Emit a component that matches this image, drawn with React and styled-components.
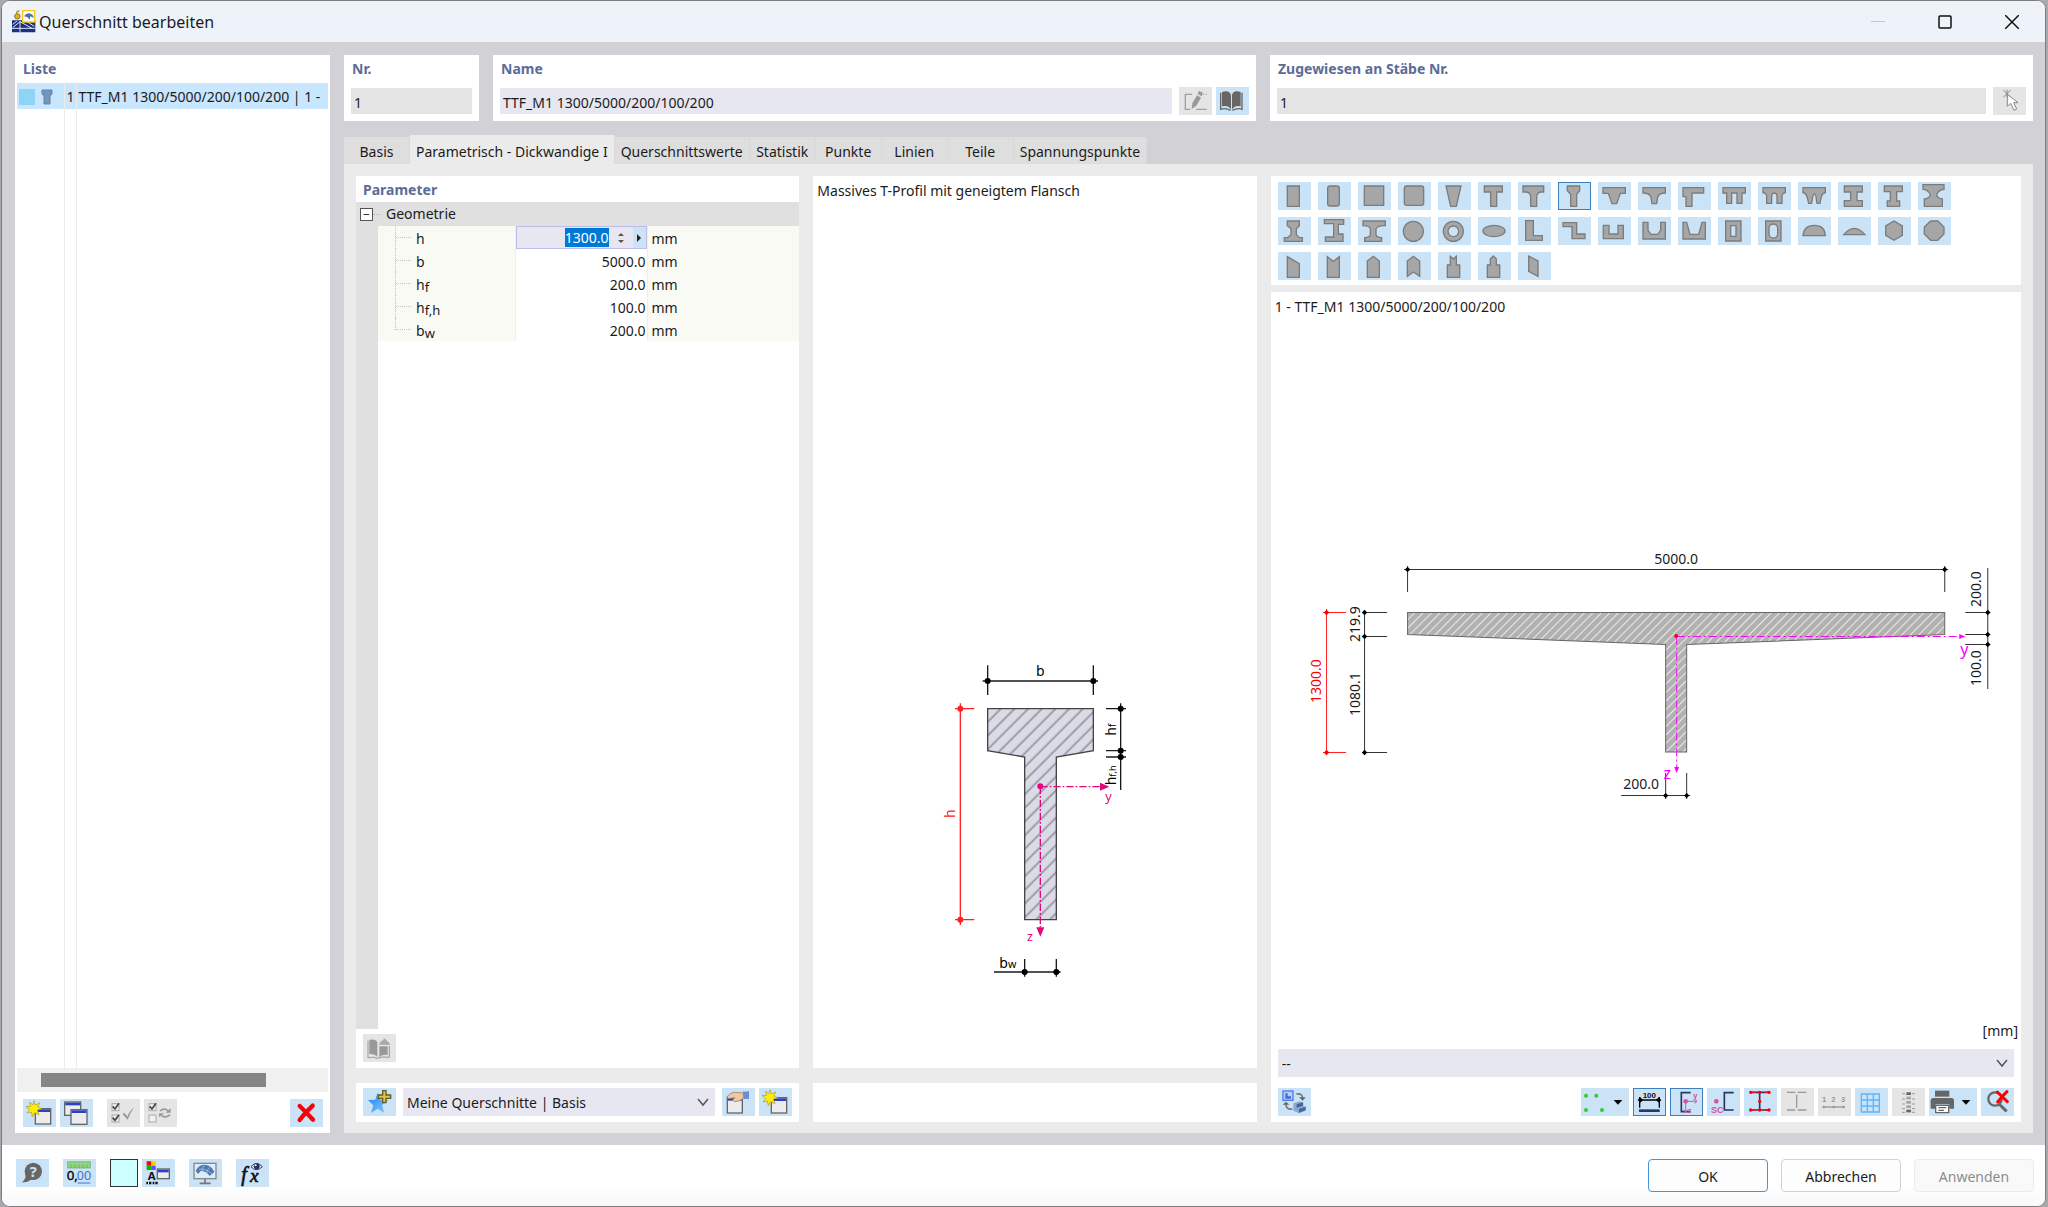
import React, { useState } from 'react';
import styled, { createGlobalStyle, css } from 'styled-components';

const palette = {
  text: '#1b1b1b',
  heading: '#5b6c97',
  frame: '#d1d1d6',
  page: '#ebebeb',
  field: '#e7e7f2',
  readonly: '#e4e4e4',
  button: '#cae3f7',
  buttonOff: '#e5e5e5',
  pressed: '#3f80bc',
  shape: '#a6a6a6',
  shapeLine: '#7c7c7c',
};

const GlobalStyle = createGlobalStyle`
  * {
    box-sizing: border-box;
  }
  body {
    margin: 0;
    background: #a9a9ad;
    color: ${palette.text};
    font-family: 'Noto Sans', 'Open Sans', sans-serif;
    font-size: 14px;
    line-height: 20px;
  }
  button, input, select {
    font: inherit;
    color: inherit;
  }
`;

const Window = styled.div`
  display: flex;
  flex-direction: column;
  min-height: 100vh;
  margin: 0 2px 0 1px;
  border: 1px solid #7d7d7d;
  border-radius: 9px;
  overflow: hidden;
  background: #fff;
`;

const TitleBar = styled.header`
  display: flex;
  align-items: center;
  height: 41px;
  padding-left: 9px;
  background: #eef3fa;
  h1 {
    flex: 1;
    margin: 0 0 0 3px;
    font-size: 16px;
    font-weight: 400;
  }
`;

const CaptionButton = styled.button`
  display: flex;
  align-items: center;
  justify-content: center;
  width: 67px;
  height: 40px;
  padding: 0;
  border: 0;
  background: none;
`;

const Body = styled.main`
  display: grid;
  grid-template-columns: 315px minmax(0, 1fr);
  gap: 14px;
  flex: 1;
  padding: 13px 12px 12px 13px;
  background: ${palette.frame};
`;

const Panel = styled.section`
  display: flex;
  flex-direction: column;
  min-width: 0;
  background: #fff;
`;

const Heading = styled.h2`
  margin: 0;
  padding: 4px 7px 2px;
  color: ${palette.heading};
  font-size: 14px;
  font-weight: 700;
`;

const FieldLabel = styled.label`
  height: 32px;
  padding: 4px 1px;
  color: ${palette.heading};
  font-weight: 700;
`;

const ListPanel = styled(Panel)`
  padding: 2px 2px 6px;
  ${Heading} {
    padding: 2px 6px 4px;
  }
`;

const ListArea = styled.div`
  display: flex;
  flex: 1;
  table {
    width: 100%;
    border-collapse: collapse;
    table-layout: fixed;
  }
  td {
    padding: 2px 0 0;
    white-space: nowrap;
    overflow: hidden;
    vertical-align: middle;
  }
  td + td {
    border-left: 1px solid #ebebeb;
    padding-left: 2px;
  }
  .selected {
    height: 26px;
    background: #c9e6ff;
  }
  .marks {
    display: flex;
    align-items: center;
    gap: 6px;
    padding-left: 2px;
  }
`;

const Swatch = styled.span`
  width: 16px;
  height: 16px;
  background: #8dd5f2;
`;

const ScrollTrack = styled.div`
  height: 24px;
  padding: 5px 24px;
  background: #f0f0f0;
  div {
    width: 225px;
    height: 14px;
    background: #858585;
  }
`;

const Toolbar = styled.div`
  display: flex;
  align-items: center;
  gap: 4px;
`;

const ListToolbar = styled(Toolbar)`
  padding: 7px 5px 0 6px;
`;

const Gap = styled.span`
  flex: ${({ $grow }) => ($grow ? '1' : '0 0 6px')};
`;

const ToolButton = styled.button`
  flex: none;
  display: flex;
  align-items: center;
  width: ${({ $wide }) => ($wide ? 48 : 33)}px;
  height: 28px;
  padding: 0;
  border: 0;
  background: ${palette.button};
  ${({ $pressed }) =>
    $pressed &&
    css`
      outline: 1px solid ${palette.pressed};
      outline-offset: -1px;
    `}
  &:disabled {
    background: ${palette.buttonOff};
  }
`;

const Content = styled.div`
  display: flex;
  flex-direction: column;
  min-width: 0;
`;

const TopFields = styled.div`
  display: grid;
  grid-template-columns: 135px minmax(0, 1fr) minmax(0, 1fr);
  gap: 14px;
  margin-bottom: 14px;
`;

const FieldPanel = styled(Panel)`
  padding: 0 7px 6px;
`;

const FieldRow = styled.div`
  display: flex;
  align-items: center;
  gap: 4px;
  height: 28px;
  input {
    flex: 1;
    min-width: 0;
    height: 26px;
    padding: 2px 3px 0;
    border: 0;
    background: ${palette.field};
  }
  input:read-only {
    background: ${palette.readonly};
  }
  input + button {
    margin-left: 3px;
  }
`;

const Tabs = styled.nav`
  display: flex;
  align-items: flex-end;
  height: 29px;
`;

const Tab = styled.button`
  min-width: 66px;
  height: ${({ $active }) => ($active ? 29 : 27)}px;
  padding: ${({ $active }) => ($active ? 4 : 2)}px 6px 0;
  border: 0;
  border-right: 1px solid #d9d9d9;
  background: ${({ $active }) => ($active ? palette.page : '#dedede')};
  white-space: nowrap;
`;

const TabPage = styled.div`
  display: grid;
  grid-template-columns: minmax(0, 13fr) minmax(0, 13fr) minmax(0, 22fr);
  gap: 14px;
  flex: 1;
  padding: 12px 12px 11px;
  background: ${palette.page};
`;

const Column = styled.div`
  display: flex;
  flex-direction: column;
  gap: ${({ $gap }) => $gap}px;
`;

const GrowPanel = styled(Panel)`
  flex: 1;
`;

const BottomPanel = styled(Panel)`
  height: 39px;
  padding: 5px 7px;
`;

const Group = styled.div`
  display: flex;
  align-items: center;
  height: 24px;
  padding-left: 4px;
  background: #e0e0e0;
  span {
    width: 8px;
    margin-right: 5px;
    border-top: 1px dotted #bbb;
  }
`;

const Expander = styled.button`
  width: 13px;
  height: 13px;
  padding: 0;
  border: 1px solid #555;
  background: #fff;
  font-size: 12px;
  line-height: 9px;
`;

const Tree = styled.div`
  display: flex;
  flex: 1;
  align-items: flex-start;
  border-left: 22px solid #e0e0e0;
`;

const ParamTable = styled.table`
  width: 100%;
  border-collapse: collapse;
  table-layout: fixed;
  tr {
    height: 23px;
  }
  th, td {
    padding: 2px 0 0;
    background: #fafaf5;
    font-weight: 400;
    text-align: left;
    white-space: nowrap;
  }
  td:first-child {
    padding: 0;
    vertical-align: top;
  }
  td:nth-child(2) {
    padding-right: 1px;
    border-left: 1px solid #eee;
    border-right: 1px solid #eee;
    background: #fff;
    text-align: right;
  }
  tr:first-child td:nth-child(2) {
    padding: 0;
  }
  td:last-child {
    padding-left: 4px;
  }
  .name {
    display: flex;
    height: 23px;
    margin-left: 17px;
    border-left: 1px dotted #c4c4c4;
    line-height: 25px;
  }
  tr:last-child .name {
    height: 12px;
  }
  .name i {
    width: 15px;
    height: 12px;
    margin-right: 5px;
    border-bottom: 1px dotted #c4c4c4;
  }
  sub {
    font-size: 13px;
    line-height: 0;
    vertical-align: -2px;
  }
`;

const Spin = styled.div`
  display: flex;
  align-items: center;
  height: 23px;
  border: 1px solid #bdbdeb;
  background: ${palette.field};
  input {
    flex: 0 0 44px;
    width: 44px;
    height: 19px;
    margin-left: auto;
    padding: 1px 0 0;
    border: 0;
    background: #0078d7;
    color: #fff;
    text-align: right;
  }
  button {
    width: 13px;
    height: 21px;
    padding: 0;
    border: 0;
    background: ${palette.button};
  }
  button:first-of-type {
    width: 24px;
    background: none;
  }
  svg {
    display: block;
    margin: 0 auto;
  }
`;

const TableFoot = styled.div`
  padding: 5px 7px 6px;
`;

const Note = styled.p`
  margin: 0;
  padding: 5px 4px 3px;
`;

const SketchArea = styled.div`
  flex: 1;
  display: flex;
  align-items: flex-end;
  justify-content: center;
  padding-bottom: 78px;
`;

const PreviewArea = styled.div`
  flex: 1;
  display: flex;
  align-items: center;
  padding-top: 10px;
  svg {
    width: 100%;
  }
`;

const ShapePanel = styled(Panel)`
  height: 109px;
  padding: 6px 7px;
`;

const ShapeGrid = styled.div`
  display: grid;
  grid-template-columns: repeat(17, 33px);
  gap: 7px;
`;

const Unit = styled.div`
  padding: 0 3px 8px;
  text-align: right;
`;

const PreviewFoot = styled.div`
  display: flex;
  flex-direction: column;
  gap: 11px;
  padding: 0 7px 6px;
`;

const SelectBox = styled.div`
  position: relative;
  flex: 1;
  margin: ${({ $inRow }) => ($inRow ? '0 3px' : '0')};
  select {
    display: block;
    width: 100%;
    height: 28px;
    padding: 2px 4px 0;
    border: 0;
    border-radius: 0;
    background: ${palette.field};
    appearance: none;
  }
  svg {
    position: absolute;
    top: 10px;
    right: 5px;
    pointer-events: none;
  }
`;

const Footer = styled.footer`
  display: flex;
  align-items: flex-start;
  justify-content: space-between;
  height: 61px;
  padding: 14px 11px 14px 14px;
  background: linear-gradient(#fff 60%, #f9f9f9);
`;

const FooterTools = styled(Toolbar)`
  gap: 14px;
`;

const ColorButton = styled.button`
  width: 28px;
  height: 28px;
  border: 1px solid #333;
  background: #ccffff;
`;

const Actions = styled.div`
  display: flex;
  gap: 13px;
`;

const ActionButton = styled.button`
  width: 120px;
  height: 33px;
  padding: 2px 0 0;
  border: 1px solid ${({ $primary }) => ($primary ? '#4595d6' : '#d2d2d2')};
  border-radius: 4px;
  background: #fdfdfd;
  &:disabled {
    border-color: #ebebeb;
    background: #f9f9f9;
    color: #8c8c8c;
  }
`;

/* ---------- icons, all on a 99 x 84 grid ---------- */

const Icon = ({ wide, children }) => (
  <svg width={wide ? 48 : 33} height='28' viewBox={wide ? '0 0 144 84' : '0 0 99 84'} fill='none' aria-hidden='true'>
    {children}
  </svg>
);

const MiniWindow = ({ x, y, w = 46, h = 46 }) => (
  <g>
    <rect x={x} y={y} width={w} height={h} fill='#ececec' stroke='#666' strokeWidth='4' />
    <rect x={x + 2} y={y + 2} width={w - 4} height='8' fill='#2d3fc4' />
  </g>
);

const Burst = () => (
  <path
    d='M33 5l4 13 13-6-6 12 13 5-14 4 5 14-13-6-7 12-3-14-13 3 8-11-11-8 14-1-4-12 11 7z'
    fill='#ffee00'
    stroke='#a89a2a'
    strokeWidth='2'
  />
);

const NewIcon = () => (
  <Icon>
    <MiniWindow x={37} y={29} />
    <Burst />
  </Icon>
);

const CopyIcon = () => (
  <Icon>
    <MiniWindow x={14} y={9} w={48} h={40} />
    <MiniWindow x={33} y={32} w={48} h={44} />
  </Icon>
);

const TickBox = ({ y, ticked }) => (
  <g>
    <rect x='15' y={y} width='21' height='21' fill='#f0f0f0' stroke='#aaa' strokeWidth='3' />
    {ticked && <path d={`M17 ${y + 8}l7 8 12-17`} stroke='#444' strokeWidth='5' />}
  </g>
);

const CheckAllIcon = () => (
  <Icon>
    <TickBox y={14} ticked />
    <TickBox y={48} ticked />
    <path d='M46 45l7-3 8 11q6-17 21-28-13 17-20 37z' fill='#999' />
  </Icon>
);

const InvertIcon = () => (
  <Icon>
    <TickBox y={14} ticked />
    <TickBox y={48} />
    <path d='M48 36q12-11 24-1M78 47q-12 11-25 3' stroke='#999' strokeWidth='5' />
    <path d='M80 28v13H64zM45 55V43h16z' fill='#999' />
  </Icon>
);

const DeleteIcon = () => (
  <Icon>
    <path d='M29 21q18 17 40 41M68 20Q44 42 29 63' stroke='#fb0007' strokeWidth='13' strokeLinecap='round' />
  </Icon>
);

const EditIcon = () => (
  <Icon>
    <path d='M39 22H19v45h15M51 67h32M71 22h4M80 22h3' stroke='#a0a0a0' strokeWidth='4' />
    <path d='M38 66l2-17 14-24 12 7-14 24z' fill='#999' />
    <path d='M56 21l4-10 11 6-3 11z' fill='#999' />
  </Icon>
);

const BookIcon = () => (
  <Icon>
    <path d='M18 15q22-8 27 9v43q-9-14-27-9zM74 15q-22-8-26 9v43q9-14 26-9z' fill='#666' />
    <path d='M14 17v50q15-5 30 3M78 17v50q-14-5-29 3' stroke='#666' strokeWidth='4' />
  </Icon>
);

const BookExportIcon = () => (
  <Icon>
    <path d='M19 17q20-3 24 7v45q-8-10-24-9z' fill='#999' />
    <path d='M49 37h25v26q-14-3-25 6z' fill='#999' />
    <path d='M15 20v51q15-4 28 2 15-7 36-3V36' stroke='#999' strokeWidth='3' />
    <path d='M47 32q5-12 15-15v-6l18 17v5z' fill='#aaa' />
  </Icon>
);

const PickIcon = () => (
  <Icon>
    <path d='M31 9l22 22M53 9L31 31M42 8v23' stroke='#888' strokeWidth='3' />
    <path d='M43 22v36l10-9 10 21 8-4-9-19h13z' fill='#fff' stroke='#888' strokeWidth='3' />
  </Icon>
);

const StarIcon = () => (
  <Icon>
    <defs>
      <linearGradient id='star' x1='0' y1='0' x2='1' y2='1'>
        <stop offset='0.2' stopColor='#2e93f5' />
        <stop offset='1' stopColor='#8cc8ff' />
      </linearGradient>
    </defs>
    <path d='M44 14l8 21 24 1-19 16 7 23-20-13-20 13 7-23-16-16 22-1z' fill='url(#star)' />
    <path d='M59 8h10v13h14v10H69v13H59V31H46V21h13z' fill='#d9c64c' stroke='#655c28' strokeWidth='4' />
  </Icon>
);

const HandIcon = () => (
  <Icon>
    <MiniWindow x={16} y={28} w={45} h={47} />
    <path d='M15 27q9-14 26-14l23 2v16q-11 10-25 10l-8-4 7-8-18 3z' fill='#efc9a3' stroke='#927055' strokeWidth='2' />
    <path d='M63 10q9 3 18-1v25q-8-3-16 0z' fill='#6a8fd0' />
  </Icon>
);

const ViewSwapIcon = () => (
  <Icon>
    <rect x='15' y='9' width='30' height='28' fill='#b8d0ff' stroke='#4c7de0' strokeWidth='4' />
    <path d='M22 16h7v9h10v7H22z' fill='#3f6ad8' />
    <path d='M55 18q19-3 19 14M43 63q-20 2-19-15' stroke='#777' strokeWidth='5' />
    <path d='M63 28h20L74 38zM14 50h20L24 41z' fill='#666' />
    <path d='M46 46l20-6 10 4v10l7 2v12l-20 8-17-8z' fill='#8fa7cf' />
    <path d='M56 49l19-6v10l-19 6zM63 63l20-7v10l-20 8z' fill='#43659f' />
  </Icon>
);

const Caret = () => <path d='M98 36h26l-13 14z' fill='#000' />;

const PointsIcon = () => (
  <Icon wide>
    <g fill='#33cc33'>
      <circle cx='15' cy='23' r='6' />
      <circle cx='46' cy='23' r='6' />
      <circle cx='15' cy='66' r='6' />
      <circle cx='63' cy='66' r='6' />
    </g>
    <Caret />
  </Icon>
);

const DimensionIcon = () => (
  <Icon>
    <text x='49' y='29' textAnchor='middle' fontFamily='Liberation Sans' fontSize='24' fontWeight='700' fill='#111'>100</text>
    <path d='M20 27v32M79 27v32M20 36h59' stroke='#000' strokeWidth='4' />
    <path d='M14 36l8-8 8 8-8 8zM69 36l8-8 8 8-8 8z' fill='#000' />
    <path d='M18 68h62' stroke='#2b3566' strokeWidth='8' />
  </Icon>
);

const AxesIcon = () => (
  <Icon>
    <path d='M62 14H34v57h28' stroke='#2b3566' strokeWidth='5' />
    <g stroke='#d9539c' strokeWidth='3'>
      <path d='M47 40h34M47 40v32M74 34l7 6-7 6M41 65l6 8 6-8' />
    </g>
    <circle cx='47' cy='40' r='7' fill='#d9539c' />
    <text x='70' y='29' fontSize='22' fontWeight='700' fill='#d9539c'>y</text>
    <text x='54' y='76' fontSize='20' fontWeight='700' fill='#d9539c'>z</text>
  </Icon>
);

const ShearCenterIcon = () => (
  <Icon>
    <path d='M80 14H52v52h28' stroke='#2b3566' strokeWidth='5' />
    <circle cx='28' cy='40' r='7' fill='#d9539c' />
    <text x='12' y='74' fontFamily='Liberation Sans' fontSize='27' fontWeight='700' fill='#d9539c'>SC</text>
  </Icon>
);

const RedPointsIcon = () => (
  <Icon>
    <path d='M18 13h58M18 66h58M47 13v53' stroke='#2b3566' strokeWidth='5' />
    <path d='M20 13h15M61 13h15M20 66h15M61 66h15' stroke='#f11' strokeWidth='4' />
    <g fill='#f00'>
      <circle cx='20' cy='13' r='5' />
      <circle cx='75' cy='13' r='5' />
      <circle cx='47' cy='13' r='5' />
      <circle cx='47' cy='40' r='5' />
      <circle cx='20' cy='66' r='5' />
      <circle cx='47' cy='66' r='5' />
      <circle cx='75' cy='66' r='5' />
    </g>
  </Icon>
);

const ElementsIcon = () => (
  <Icon>
    <path d='M18 13h25M50 13h26M18 66h25M50 66h26M47 20v39' stroke='#999' strokeWidth='4' />
  </Icon>
);

const NumbersIcon = () => (
  <Icon>
    <text x='12' y='41' fontFamily='Liberation Sans' fontSize='23' fontWeight='700' fill='#999'>1</text>
    <text x='40' y='41' fontFamily='Liberation Sans' fontSize='23' fontWeight='700' fill='#999'>2</text>
    <text x='69' y='41' fontFamily='Liberation Sans' fontSize='23' fontWeight='700' fill='#999'>3</text>
    <path d='M17 57h60' stroke='#999' strokeWidth='4' />
    <circle cx='17' cy='57' r='4' fill='#999' />
    <circle cx='47' cy='57' r='4' fill='#999' />
    <circle cx='77' cy='57' r='4' fill='#999' />
  </Icon>
);

const GridIcon = () => (
  <Icon>
    <path d='M19 18h54v54H19zM19 36h54M19 54h54M37 18v54M55 18v54' stroke='#5ab6ff' strokeWidth='4' />
  </Icon>
);

const LayersIcon = () => (
  <Icon>
    <path d='M30 17h9M60 17h9M30 33h9M60 33h9M30 48h9M60 48h9M30 62h9M60 62h9M30 73h9M60 73h9' stroke='#999' strokeWidth='3' />
    {[13, 26, 39, 52, 65].map((y, i) => (
      <rect key={y} x='43' y={y} width='14' height='8' fill={i % 4 ? '#a5a5a5' : '#666'} />
    ))}
  </Icon>
);

const PrintIcon = () => (
  <Icon wide>
    <path d='M18 8h43v18H18z' fill='#666' />
    <path d='M5 38q0-8 8-8h54q8 0 8 8v24H61V49H19v13H5z' fill='#666' />
    <path d='M20 52h39v22H20zM28 59h24M28 67h17' fill='#fff' stroke='#666' strokeWidth='4' />
    <Caret />
  </Icon>
);

const ResetZoomIcon = () => (
  <Icon>
    <circle cx='42' cy='33' r='20' stroke='#666' strokeWidth='7' />
    <path d='M54 48l23 22' stroke='#666' strokeWidth='9' />
    <path d='M49 12q15 14 30 29M78 11Q64 24 50 42' stroke='#f00' strokeWidth='9' strokeLinecap='round' />
  </Icon>
);

const HelpIcon = () => (
  <Icon>
    <circle cx='52' cy='37' r='26' fill='#666' />
    <path d='M28 42q4 17-10 28 17 1 30-9z' fill='#666' />
    <text x='52' y='54' textAnchor='middle' fontSize='44' fontWeight='700' fill='#cae3f7'>?</text>
  </Icon>
);

const DecimalsIcon = () => (
  <Icon>
    <path d='M14 8h68v19H14z' fill='#8ed47e' stroke='#67ad5a' strokeWidth='2' />
    <path d='M24 17v9M36 17v9M48 17v9M60 17v9M72 17v9' stroke='#5f9c55' strokeWidth='2' />
    <text x='11' y='63' fontSize='40' fill='#000' stroke='#000'>0,</text>
    <text x='41' y='63' fontSize='38' fill='#3e70d8'>00</text>
    <path d='M44 72h38' stroke='#3e70d8' strokeWidth='3' />
  </Icon>
);

const DisplayIcon = () => (
  <Icon>
    <path d='M14 7h14v13H14z' fill='#f00' />
    <path d='M28 7h13v13H28z' fill='#fc0' />
    <path d='M14 20h14v13H14z' fill='#0b0' />
    <path d='M28 20h13v13H28z' fill='#55f' />
    <text x='17' y='64' fontSize='34' fontWeight='700' fill='#111'>A</text>
    <path d='M13 72h34' stroke='#111' strokeWidth='7' strokeDasharray='5 3 7 4' />
    <MiniWindow x={46} y={30} w={36} h={29} />
  </Icon>
);

const MonitorIcon = () => (
  <Icon>
    <rect x='15' y='13' width='66' height='46' fill='#dcecf8' stroke='#888' strokeWidth='4' />
    <path d='M20 35q10-19 27-18 22 3 29 22L62 51Q51 35 35 36l-8 9z' fill='#4f79ae' />
    <path d='M30 31q18-5 40 15M47 19q-8 7-8 17M62 25q-8 8-9 17' stroke='#bcd4ee' strokeWidth='2' />
    <path d='M48 60v13M32 73h33' stroke='#777' strokeWidth='5' />
  </Icon>
);

const FormulaIcon = () => (
  <Icon>
    <text x='16' y='67' fontFamily='Liberation Serif' fontStyle='italic' fontSize='60' fill='#111' stroke='#111' strokeWidth='2'>f</text>
    <text x='42' y='68' fontFamily='Liberation Serif' fontStyle='italic' fontSize='58' fill='#111' stroke='#111' strokeWidth='2'>x</text>
    <path d='M45 23q16-19 34 0-18 18-34 0z' fill='#fff' stroke='#222c66' strokeWidth='3' />
    <circle cx='62' cy='22' r='9' fill='#222c66' />
    <circle cx='59' cy='19' r='3' fill='#fff' />
  </Icon>
);

const AppIcon = () => (
  <svg width='25' height='25' viewBox='0 0 75 75' aria-hidden='true'>
    <path d='M3 34h70v36H3z' fill='#1c3280' />
    <path d='M3 58h70M27 36v34M27 38L5 56M27 38l36 20M45 36l25 16M18 36L5 46' stroke='#dfe6f5' strokeWidth='3' />
    <path d='M35 5h36v34H35z' fill='#fff' stroke='#f2c81e' strokeWidth='4' />
    <path d='M39 22q9-13 20-8 9 4 9 13-7-6-11-4v9q-8-10-18-10z' fill='#4f6f9d' />
    <circle cx='19' cy='22' r='8' fill='#d8b71f' stroke='#85711b' strokeWidth='3' />
    <path d='M17 14q-1-7 8-8' stroke='#a88d18' strokeWidth='4' fill='none' />
  </svg>
);

const Chevron = () => (
  <svg width='14' height='9' viewBox='0 0 14 9' fill='none' aria-hidden='true'>
    <path d='M2 1l5 6 5-6' stroke='#555' strokeWidth='1.5' />
  </svg>
);

/* ---------- profile shapes ---------- */

const shapes = [
  ['Rechteck', 'M28 12h36v61H28z'],
  ['Rechteck gerundet', 'M36 12h21q7 0 7 7v46q0 7-7 7H36q-7 0-7-7V19q0-7 7-7z'],
  ['Quadrat', 'M19 12h58v58H19z'],
  ['Quadrat gerundet', 'M26 12h44q7 0 7 7v44q0 7-7 7H26q-7 0-7-7V19q0-7 7-7z'],
  ['Trapez', 'M24 12h45L55 73H38z'],
  ['T-Profil', 'M19 12h54v18H56v43H38V30H19z'],
  ['T-Profil mit Voute', 'M15 12h62v18h-9q-12 3-12 14v29H38V44q0-11-12-14H15z'],
  ['T-Profil mit geneigtem Flansch', 'M28 12h37v14l-9 11v36H38V37l-10-11z'],
  ['T-Profil konisch', 'M15 17h67v17H67L56 65H42L31 34H15z'],
  ['T-Profil konisch mit Voute', 'M15 17h67v16q-20 0-23 13l-3 19H42l-3-19q-3-13-24-13z'],
  ['T-Profil einseitig', 'M15 17h62v16H42v40H24V44h-9z'],
  ['Doppelsteg', 'M15 17h67v16H72v31H57V33H41v31H26V33H15z'],
  ['Doppelsteg mit Voute', 'M15 17h67v15q-10 2-10 12v20H57V44q0-11-8-11t-8 11v20H26V44q0-10-11-12z'],
  ['Doppelsteg konisch', 'M15 17h67v15q-10 2-12 12l-4 20h-9l-3-20q-5-18-10 0l-3 20h-9l-5-20q-2-10-12-12z'],
  ['I-Profil', 'M19 12h54v18H57v26h16v17H19V56h19V30H19z'],
  ['I-Profil unsymmetrisch', 'M19 12h54v17H56v28h9v16H28V57h9V29H19z'],
  ['I-Profil mit Voute', 'M15 8h63v14q-11 0-18 9-7 9 0 15 6 5 13 5v22H19V51q7 0 14-5 7-7 0-15-7-9-18-9z'],
  ['I-Profil mit Schraegen', 'M28 12h36v14l-9 9v18l9 9h9v11H19V62h9l11-9V35l-11-9z'],
  ['I-Profil versetzt', 'M19 8h58v14H61v29h14v22H22V60h25V20H19z'],
  ['I-Profil Voute unten', 'M15 12h67v14q-20-2-28 9v18q1 8 17 9v11H20V62q16-1 17-9V35q-2-9-22-9z'],
  ['Kreis', 'M16 43a30 30 0 1 0 60 0a30 30 0 1 0-60 0z'],
  ['Ring', 'M16 43a30 30 0 1 0 60 0a30 30 0 1 0-60 0zM30 43a16 16 0 1 0 32 0a16 16 0 1 0-32 0z'],
  ['Ellipse', 'M15 42a33 17 0 1 0 66 0a33 17 0 1 0-66 0z'],
  ['L-Profil', 'M23 11h23v45h27v14H23z'],
  ['Z-Profil', 'M15 17h41v34h25v14H42V29H15z'],
  ['U-Profil', 'M16 25h17v26h27V25h16v40H16z'],
  ['U-Profil mit Voute', 'M15 16h15v24l9 12h20l9-12V16h14v50H15z'],
  ['U-Profil konisch', 'M15 16h11l10 36h26l10-36h10v50H15z'],
  ['Hohlkasten', 'M23 12h46v60H23zM38 26v32h16V26z'],
  ['Hohlkasten oval', 'M23 12h46v60H23zM33 34v16a13 13 0 0 0 26 0V34a13 13 0 0 0-26 0z'],
  ['Halbkreis', 'M15 56q2-31 34-31t33 31z'],
  ['Kreissegment', 'M17 53q32-38 64 0z'],
  ['Sechseck', 'M48 12l25 15v28L48 70 23 55V27z'],
  ['Achteck', 'M38 12h21l19 18v21L59 70H38L19 51V30z'],
  ['Pultform', 'M28 14l36 21v41H28z'],
  ['Kerbe oben', 'M28 14l18 14 18-14v62H28z'],
  ['Spitze oben', 'M28 27l18-14 18 14v49H28z'],
  ['Pfeil', 'M28 27l18-14 19 14v46L46 60 28 73z'],
  ['Absatz mit Kerbe', 'M37 13l9 8 9-8v26h10v37H28V39h9z'],
  ['Absatz mit Spitze', 'M37 21l9-9 9 9v18h10v37H28V39h9z'],
  ['Parallelogramm', 'M32 12l28 15v46L32 58z'],
];

const ShapeIcon = ({ d }) => (
  <Icon>
    <path d={d} fill={palette.shape} stroke={palette.shapeLine} strokeWidth='4' fillRule='evenodd' />
  </Icon>
);

const TypeSketch = () => (
  <svg width='220' height='340' viewBox='-15 0 660 1020' fontSize='42' aria-label='Profilskizze'>
    <defs>
      <pattern id='sketchHatch' width='29' height='29' patternUnits='userSpaceOnUse' patternTransform='rotate(45)'>
        <path d='M14 0v29' stroke='#9c9cab' strokeWidth='6' />
      </pattern>
    </defs>
    <path d='M173 176h317v126l-111 19v488h-95V321l-111-19z' fill='#dbdbe6' />
    <path d='M173 176h317v126l-111 19v488h-95V321l-111-19z' fill='url(#sketchHatch)' stroke='#444' strokeWidth='4' />
    <g stroke='#1a1a1a' strokeWidth='4'>
      <path d='M158 93h346M173 46v89M490 46v89' />
      <path d='M572 160v260M528 176h60M528 302h60M528 321h60' />
      <path d='M192 966h200M284 927v53M379 927v53' />
    </g>
    <g fill='#000'>
      <circle cx='173' cy='93' r='9' />
      <circle cx='490' cy='93' r='9' />
      <circle cx='572' cy='176' r='9' />
      <circle cx='572' cy='302' r='9' />
      <circle cx='572' cy='321' r='9' />
      <circle cx='284' cy='966' r='9' />
      <circle cx='379' cy='966' r='9' />
    </g>
    <path d='M91 160v665M75 176h58M75 809h58' stroke='#f22' strokeWidth='4' />
    <circle cx='91' cy='176' r='9' fill='#f22' />
    <circle cx='91' cy='809' r='9' fill='#f22' />
    <path d='M331 410h180M331 410v422' stroke='#e0087c' strokeWidth='4' strokeDasharray='22 6 5 6' />
    <circle cx='331' cy='409' r='9' fill='#e0087c' />
    <path d='M510 398l28 12-28 12zM319 832h24l-12 28z' fill='#e0087c' />
    <text x='331' y='79' textAnchor='middle'>b</text>
    <text x='208' y='953'>b<tspan fontSize='32'>w</tspan></text>
    <text x='526' y='452' fill='#e0087c' fontSize='38'>y</text>
    <text x='291' y='872' fill='#e0087c' fontSize='38'>z</text>
    <text transform='translate(75 491) rotate(-90)' textAnchor='middle' fill='#f22'>h</text>
    <text transform='translate(558 239) rotate(-90)' textAnchor='middle'>h<tspan fontSize='32'>f</tspan></text>
    <text transform='translate(558 376) rotate(-90)' textAnchor='middle'>h<tspan fontSize='28'>f,h</tspan></text>
  </svg>
);

const Dot = ({ x, y, color }) => <path d={`M${x - 2} ${y}l2-2 2 2-2 2z`} fill={color} stroke={color} />;

const SectionDrawing = () => (
  <svg viewBox='0 0 750 270' fontSize='14' fill='none' aria-label='Querschnitt'>
    <defs>
      <pattern id='sectionHatch' width='6' height='6' patternUnits='userSpaceOnUse' patternTransform='rotate(45)'>
        <path d='M3 0v6' stroke='#ececec' />
      </pattern>
    </defs>
    <path d='M136.5 72.5h537v22l-258 10v107.5h-21V104.5l-258-10z' fill='#b1b1b1' />
    <path d='M136.5 72.5h537v22l-258 10v107.5h-21V104.5l-258-10z' fill='url(#sectionHatch)' stroke='#666' />
    <g stroke='#333'>
      <path d='M133 29.5h544M136.5 26v26M673.5 26v26' />
      <path d='M93.5 70v145M91 72.5h25M91 96.5h25M91 212.5h25' />
      <path d='M716.5 28v121M694 72.5h25M694 94.5h25M694 104.5h25' />
      <path d='M350 255.5h69M394.5 233v26M415.5 233v26' />
    </g>
    {[[136.5, 29.5], [673.5, 29.5], [93.5, 72.5], [93.5, 96.5], [93.5, 212.5], [716.5, 72.5], [716.5, 94.5],
      [716.5, 104.5], [394.5, 255.5], [415.5, 255.5]].map(([x, y]) => (
      <Dot key={`${x}-${y}`} x={x} y={y} color='#000' />
    ))}
    <path d='M55.5 69v146M52 72.5h23M52 212.5h23' stroke='#f22' />
    <Dot x={55.5} y={72.5} color='#f00' />
    <Dot x={55.5} y={212.5} color='#f00' />
    <path d='M405.5 96.5H689M405.5 96.5V228' stroke='#f0f' strokeDasharray='8 3 2 3' />
    <path d='M688 94l6 2.5-6 2.5zM403 227h5l-2.5 6z' fill='#f0f' />
    <circle cx='405' cy='96' r='2' fill='#f00' />
    <g fill={palette.text} textAnchor='middle'>
      <text x='405' y='24'>5000.0</text>
      <text x='370' y='249'>200.0</text>
      <text transform='translate(89 84) rotate(-90)'>219.9</text>
      <text transform='translate(89 154) rotate(-90)'>1080.1</text>
      <text transform='translate(710 49) rotate(-90)'>200.0</text>
      <text transform='translate(710 128) rotate(-90)'>100.0</text>
      <text transform='translate(50 141) rotate(-90)' fill='#f00'>1300.0</text>
      <text x='693' y='115' fontSize='16' fill='#f0f'>y</text>
      <text x='396' y='239' fontSize='16' fill='#f0f'>z</text>
    </g>
  </svg>
);

const tabs = [
  'Basis',
  'Parametrisch - Dickwandige I',
  'Querschnittswerte',
  'Statistik',
  'Punkte',
  'Linien',
  'Teile',
  'Spannungspunkte',
];

const params = [
  { name: 'h', value: '1300.0' },
  { name: 'b', value: '5000.0' },
  { name: 'h', sub: 'f', value: '200.0' },
  { name: 'h', sub: 'f,h', value: '100.0' },
  { name: 'b', sub: 'w', value: '200.0' },
];

const Tool = ({ label, icon: Glyph, wide, pressed, disabled }) => (
  <ToolButton type='button' aria-label={label} $wide={wide} $pressed={pressed} disabled={disabled}>
    <Glyph />
  </ToolButton>
);

const ParameterTree = ({ height, setHeight }) => (
  <>
    <Group>
      <Expander type='button' aria-label='Geometrie einklappen'>−</Expander>
      <span />
      Geometrie
    </Group>
    <Tree>
      <ParamTable>
        <colgroup>
          <col width='137' />
          <col width='132' />
          <col />
        </colgroup>
        <tbody>
          {params.map(({ name, sub, value }, i) => (
            <tr key={name + sub}>
              <td>
                <div className='name'>
                  <i />
                  <span>
                    {name}
                    {sub && <sub>{sub}</sub>}
                  </span>
                </div>
              </td>
              <td>
                {i === 0 ? (
                  <Spin>
                    <input aria-label='h' value={height} onChange={(e) => setHeight(e.target.value)} />
                    <button type='button' aria-label='Wert aendern'>
                      <svg width='8' height='12' viewBox='0 0 8 12'>
                        <path d='M1 4l3-3 3 3zM1 8l3 3 3-3z' fill='#555' />
                      </svg>
                    </button>
                    <button type='button' aria-label='Weitere Optionen'>
                      <svg width='6' height='8' viewBox='0 0 6 8'>
                        <path d='M1 0l4 4-4 4z' fill='#222' />
                      </svg>
                    </button>
                  </Spin>
                ) : (
                  value
                )}
              </td>
              <td>mm</td>
            </tr>
          ))}
        </tbody>
      </ParamTable>
    </Tree>
  </>
);

const App = () => {
  const [activeTab, setActiveTab] = useState(1);
  const [activeShape, setActiveShape] = useState(7);
  const [name, setName] = useState('TTF_M1 1300/5000/200/100/200');
  const [height, setHeight] = useState('1300.0');

  return (
    <>
      <GlobalStyle />
      <Window>
        <TitleBar>
          <AppIcon />
          <h1>Querschnitt bearbeiten</h1>
          <CaptionButton type='button' aria-label='Minimieren' disabled>
            <svg width='14' height='14' viewBox='0 0 14 14'>
              <path d='M0 6.5h14' stroke='#c3c7cc' />
            </svg>
          </CaptionButton>
          <CaptionButton type='button' aria-label='Maximieren'>
            <svg width='14' height='14' viewBox='0 0 14 14' fill='none'>
              <rect x='1' y='1' width='12' height='12' rx='1' stroke='#111' strokeWidth='1.5' />
            </svg>
          </CaptionButton>
          <CaptionButton type='button' aria-label='Schliessen'>
            <svg width='14' height='14' viewBox='0 0 14 14'>
              <path d='M0 0l14 14M14 0L0 14' stroke='#111' strokeWidth='1.5' />
            </svg>
          </CaptionButton>
        </TitleBar>

        <Body>
          <ListPanel>
            <Heading>Liste</Heading>
            <ListArea>
              <table>
                <colgroup>
                  <col width='47' />
                  <col width='12' />
                  <col />
                </colgroup>
                <tbody>
                  <tr className='selected'>
                    <td>
                      <div className='marks'>
                        <Swatch />
                        <svg width='12' height='16' viewBox='0 0 12 16'>
                          <path d='M1 1h10v4L9 7v8H3V7L1 5z' fill='#7496b8' stroke='#5f83a8' />
                        </svg>
                      </div>
                    </td>
                    <td>1</td>
                    <td>TTF_M1 1300/5000/200/100/200 | 1 -</td>
                  </tr>
                  <tr>
                    <td />
                    <td />
                    <td />
                  </tr>
                </tbody>
              </table>
            </ListArea>
            <ScrollTrack>
              <div />
            </ScrollTrack>
            <ListToolbar>
              <Tool label='Neu' icon={NewIcon} />
              <Tool label='Kopieren' icon={CopyIcon} />
              <Gap />
              <Tool label='Alle markieren' icon={CheckAllIcon} disabled />
              <Tool label='Auswahl umkehren' icon={InvertIcon} disabled />
              <Gap $grow />
              <Tool label='Loeschen' icon={DeleteIcon} />
            </ListToolbar>
          </ListPanel>

          <Content>
            <TopFields>
              <FieldPanel>
                <FieldLabel htmlFor='nr'>Nr.</FieldLabel>
                <FieldRow>
                  <input id='nr' value='1' readOnly />
                </FieldRow>
              </FieldPanel>
              <FieldPanel>
                <FieldLabel htmlFor='name'>Name</FieldLabel>
                <FieldRow>
                  <input id='name' value={name} onChange={(e) => setName(e.target.value)} />
                  <Tool label='Name bearbeiten' icon={EditIcon} disabled />
                  <Tool label='Bibliothek' icon={BookIcon} />
                </FieldRow>
              </FieldPanel>
              <FieldPanel>
                <FieldLabel htmlFor='members'>Zugewiesen an Stäbe Nr.</FieldLabel>
                <FieldRow>
                  <input id='members' value='1' readOnly />
                  <Tool label='Auswahl' icon={PickIcon} disabled />
                </FieldRow>
              </FieldPanel>
            </TopFields>

            <Tabs>
              {tabs.map((tab, i) => (
                <Tab key={tab} type='button' $active={i === activeTab} onClick={() => setActiveTab(i)}>
                  {tab}
                </Tab>
              ))}
            </Tabs>

            <TabPage>
              <Column $gap={15}>
                <GrowPanel>
                  <Heading>Parameter</Heading>
                  <ParameterTree height={height} setHeight={setHeight} />
                  <TableFoot>
                    <Tool label='In Bibliothek speichern' icon={BookExportIcon} disabled />
                  </TableFoot>
                </GrowPanel>
                <BottomPanel>
                  <Toolbar>
                    <Tool label='Zu Favoriten' icon={StarIcon} />
                    <SelectBox $inRow>
                      <select aria-label='Favoriten'>
                        <option>Meine Querschnitte | Basis</option>
                      </select>
                      <Chevron />
                    </SelectBox>
                    <Tool label='Favoriten verwalten' icon={HandIcon} />
                    <Tool label='Neue Gruppe' icon={NewIcon} />
                  </Toolbar>
                </BottomPanel>
              </Column>

              <Column $gap={15}>
                <GrowPanel>
                  <Note>Massives T-Profil mit geneigtem Flansch</Note>
                  <SketchArea>
                    <TypeSketch />
                  </SketchArea>
                </GrowPanel>
                <BottomPanel />
              </Column>

              <Column $gap={7}>
                <ShapePanel>
                  <ShapeGrid>
                    {shapes.map(([label, d], i) => (
                      <ToolButton
                        key={label}
                        type='button'
                        aria-label={label}
                        $pressed={i === activeShape}
                        onClick={() => setActiveShape(i)}
                      >
                        <ShapeIcon d={d} />
                      </ToolButton>
                    ))}
                  </ShapeGrid>
                </ShapePanel>
                <GrowPanel>
                  <Note>1 - TTF_M1 1300/5000/200/100/200</Note>
                  <PreviewArea>
                    <SectionDrawing />
                  </PreviewArea>
                  <Unit>[mm]</Unit>
                  <PreviewFoot>
                    <SelectBox>
                      <select aria-label='Ergebnis'>
                        <option>--</option>
                      </select>
                      <Chevron />
                    </SelectBox>
                    <Toolbar>
                      <Tool label='Ansicht wechseln' icon={ViewSwapIcon} />
                      <Gap $grow />
                      <Tool label='Spannungspunkte' icon={PointsIcon} wide />
                      <Tool label='Bemassung' icon={DimensionIcon} pressed />
                      <Tool label='Achsen' icon={AxesIcon} pressed />
                      <Tool label='Schubmittelpunkt' icon={ShearCenterIcon} />
                      <Tool label='Punkte' icon={RedPointsIcon} />
                      <Tool label='Elemente' icon={ElementsIcon} disabled />
                      <Tool label='Nummerierung' icon={NumbersIcon} disabled />
                      <Tool label='Raster' icon={GridIcon} />
                      <Tool label='Werte' icon={LayersIcon} disabled />
                      <Tool label='Drucken' icon={PrintIcon} wide />
                      <Tool label='Ansicht zuruecksetzen' icon={ResetZoomIcon} />
                    </Toolbar>
                  </PreviewFoot>
                </GrowPanel>
              </Column>
            </TabPage>
          </Content>
        </Body>

        <Footer>
          <FooterTools>
            <Tool label='Hilfe' icon={HelpIcon} />
            <Tool label='Einheiten' icon={DecimalsIcon} />
            <Toolbar>
              <ColorButton type='button' aria-label='Farbe' />
              <Tool label='Darstellung' icon={DisplayIcon} />
            </Toolbar>
            <Tool label='Anzeige' icon={MonitorIcon} />
            <Tool label='Formel' icon={FormulaIcon} />
          </FooterTools>
          <Actions>
            <ActionButton type='submit' $primary>OK</ActionButton>
            <ActionButton type='button'>Abbrechen</ActionButton>
            <ActionButton type='button' disabled>Anwenden</ActionButton>
          </Actions>
        </Footer>
      </Window>
    </>
  );
};

export default App;
